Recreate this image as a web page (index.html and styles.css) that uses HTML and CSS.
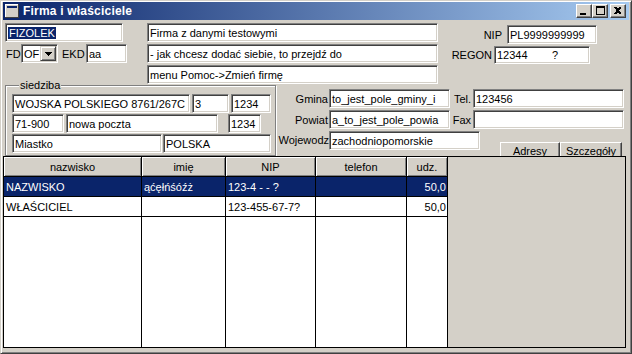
FILE: index.html
```html
<!DOCTYPE html>
<html lang="pl">
<head>
    <meta charset="UTF-8">
    <title>Firma i właściciele</title>
    <link rel="stylesheet" href="styles.css">
</head>
<body>
    <div class="window">
        <div class="titlebar">
            <svg class="app-icon" width="14" height="14" viewBox="0 0 14 14" shape-rendering="crispEdges">
                <rect x="0" y="0" width="14" height="14" fill="#d4d0c8"/>
                <rect x="0" y="0" width="13" height="1" fill="#fff"/>
                <rect x="0" y="0" width="1" height="13" fill="#fff"/>
                <rect x="0" y="13" width="14" height="1" fill="#404040"/>
                <rect x="13" y="0" width="1" height="14" fill="#404040"/>
                <rect x="2" y="2" width="10" height="2" fill="#0a246a"/>
            </svg>
            <span class="caption">Firma i właściciele</span>
            <div class="caption-btns">
                <span class="cbtn">
                    <svg width="14" height="12" viewBox="0 0 14 12" shape-rendering="crispEdges"><rect x="3" y="8" width="6" height="2" fill="#000"/></svg>
                </span>
                <span class="cbtn">
                    <svg width="14" height="12" viewBox="0 0 14 12" shape-rendering="crispEdges"><path d="M3 1h9v9h-9z M4 3v6h7v-6z" fill="#000" fill-rule="evenodd"/></svg>
                </span>
                <span class="cbtn close">
                    <svg width="14" height="12" viewBox="0 0 14 12" shape-rendering="crispEdges"><path d="M3 2h2l1 1h1l1-1h2v1l-2 2v1l2 2v1h-2l-1-1h-1l-1 1h-2v-1l2-2v-1l-2-2z" fill="#000"/></svg>
                </span>
            </div>
        </div>

        <div class="client">
            <div class="top">
                <div class="col-left">
                    <div class="edit w-short"><span class="sel">FIZOLEK</span></div>
                    <div class="fd-row">
                        <span class="lbl lbl-fd">FD</span>
                        <div class="edit combo">
                            <span>OF</span>
                            <span class="drop">
                                <svg width="7" height="4" viewBox="0 0 7 4" shape-rendering="crispEdges"><path d="M0 0h7v1h-1v1h-1v1h-1v1h-1v-1h-1v-1h-1v-1h-1z" fill="#000"/></svg>
                            </span>
                        </div>
                        <span class="lbl lbl-ekd">EKD</span>
                        <div class="edit w-ekd">aa</div>
                    </div>
                </div>
                <div class="col-mid">
                    <div class="edit">Firma z danymi testowymi</div>
                    <div class="edit">- jak chcesz dodać siebie, to przejdź do</div>
                    <div class="edit">menu Pomoc-&gt;Zmień firmę</div>
                </div>
                <div class="col-right">
                    <div class="row-nip">
                        <span class="lbl">NIP</span>
                        <div class="edit w-nip">PL9999999999</div>
                    </div>
                    <div class="row-regon">
                        <span class="lbl">REGON</span>
                        <div class="edit w-regon keep">12344        ?</div>
                    </div>
                </div>
            </div>

            <div class="middle">
                <fieldset class="group">
                    <legend>siedziba</legend>
                    <div class="g-row">
                        <div class="edit w178">WOJSKA POLSKIEGO 8761/267C</div>
                        <div class="edit w37">3</div>
                        <div class="edit w40">1234</div>
                    </div>
                    <div class="g-row">
                        <div class="edit w52">71-900</div>
                        <div class="edit w152">nowa poczta</div>
                        <div class="edit w33 push">1234</div>
                    </div>
                    <div class="g-row tight">
                        <div class="edit w150">Miastko</div>
                        <div class="edit w108">POLSKA</div>
                    </div>
                </fieldset>

                <div class="admin">
                    <span class="lbl">Gmina</span>
                    <div class="edit">to_jest_pole_gminy_i</div>
                    <span class="lbl lbl-small">Tel.</span>
                    <div class="edit">123456</div>

                    <span class="lbl">Powiat</span>
                    <div class="edit">a_to_jest_pole_powia</div>
                    <span class="lbl lbl-small">Fax</span>
                    <div class="edit"></div>

                    <span class="lbl lbl-top">Wojewodz</span>
                    <div class="edit woj">zachodniopomorskie</div>
                    <div class="buttons">
                        <span class="btn b-adresy">Adresy</span>
                        <span class="btn b-szcz"><u>S</u>zczegóły</span>
                    </div>
                </div>
            </div>

            <div class="grid">
                <table>
                    <tr class="head">
                        <th class="c1">nazwisko</th>
                        <th class="c2">imię</th>
                        <th class="c3">NIP</th>
                        <th class="c4">telefon</th>
                        <th class="c5">udz.</th>
                    </tr>
                    <tr class="selected">
                        <td>NAZWISKO</td>
                        <td>ąćęłńśóźż</td>
                        <td class="keep">123-4  -  - ?</td>
                        <td></td>
                        <td class="num">50,0</td>
                    </tr>
                    <tr>
                        <td>WŁAŚCICIEL</td>
                        <td></td>
                        <td>123-455-67-7?</td>
                        <td></td>
                        <td class="num">50,0</td>
                    </tr>
                    <tr class="fill">
                        <td></td><td></td><td></td><td></td><td></td>
                    </tr>
                </table>
                <div class="grid-rest"></div>
            </div>
        </div>
    </div>
</body>
</html>
```

FILE: styles.css
```css
* {
    box-sizing: border-box;
}

body {
    margin: 0;
    background: #d4d0c8;
    font-family: "Liberation Sans", Arial, sans-serif;
    font-size: 11px;
    color: #000;
}

.window {
    width: 632px;
    height: 354px;
    display: flex;
    flex-direction: column;
    border: 1px solid;
    border-color: #d4d0c8 #404040 #404040 #d4d0c8;
    box-shadow: inset 1px 1px #fff, inset -1px -1px #808080;
    padding: 1px 2px 2px 2px;
}

/* title bar */
.titlebar {
    height: 18px;
    display: flex;
    align-items: center;
    padding: 0 3px 0 2px;
    background: linear-gradient(to right, #0a246a, #a6caf0);
    color: #fff;
}

.app-icon {
    display: block;
}

.caption {
    margin-left: 4px;
    font-weight: bold;
    font-size: 12px;
    letter-spacing: 0.2px;
}

.caption-btns {
    margin-left: auto;
    display: flex;
}

.cbtn {
    width: 16px;
    height: 14px;
    display: flex;
    background: #d4d0c8;
    border: 1px solid;
    border-color: #fff #404040 #404040 #fff;
    box-shadow: inset -1px -1px #808080;
}

.cbtn svg {
    display: block;
}

.cbtn.close {
    margin-left: 2px;
}

/* client area */
.client {
    flex: 1;
    display: flex;
    flex-direction: column;
    padding-top: 3px;
}

.edit {
    height: 19px;
    display: flex;
    align-items: center;
    padding-left: 2px;
    background: #fff;
    border: 1px solid;
    border-color: #808080 #fff #fff #808080;
    box-shadow: inset 1px 1px #404040, inset -1px -1px #d4d0c8;
    white-space: nowrap;
    overflow: hidden;
}

.keep {
    white-space: pre;
}

.lbl {
    white-space: nowrap;
}

.sel {
    background: #0a246a;
    color: #fff;
    line-height: 12px;
    padding: 0 1px;
}

.top {
    display: flex;
}

.col-left {
    width: 144px;
    padding-left: 2px;
}

.w-short {
    width: 118px;
}

.fd-row {
    display: flex;
    align-items: center;
    margin-top: 2px;
}

.lbl-fd {
    margin-left: 1px;
    width: 15px;
}

.combo {
    width: 37px;
    padding-right: 1px;
}

.drop {
    margin-left: auto;
    width: 16px;
    height: 15px;
    display: flex;
    align-items: center;
    justify-content: center;
    background: #d4d0c8;
    border: 1px solid;
    border-color: #d4d0c8 #404040 #404040 #d4d0c8;
    box-shadow: inset 1px 1px #fff, inset -1px -1px #808080;
}

.drop svg {
    display: block;
}

.lbl-ekd {
    margin-left: 4px;
    width: 24px;
}

.w-ekd {
    width: 41px;
}

.col-mid {
    width: 291px;
    display: flex;
    flex-direction: column;
    gap: 2px;
}

.col-right {
    flex: 1;
    display: flex;
    flex-direction: column;
    align-items: flex-end;
    padding-top: 2px;
}

.row-nip,
.row-regon {
    display: flex;
    align-items: center;
}

.row-nip {
    margin-right: 32px;
    gap: 5px;
}

.row-regon {
    margin-top: 2px;
    margin-right: 39px;
    gap: 2px;
}

.w-nip {
    width: 90px;
}

.w-regon {
    width: 96px;
    height: 18px;
}

/* siedziba + adres */
.middle {
    display: flex;
    align-items: flex-start;
    margin-top: -4px;
}

.group {
    width: 271px;
    margin: 0 0 0 2px;
    padding: 3px 4px 2px 6px;
    border: 1px solid #808080;
    box-shadow: inset 1px 1px #fff, 1px 1px #fff;
    min-width: 0;
}

.group legend {
    padding: 0 1px;
    margin-left: 7px;
    line-height: 11px;
    background: #d4d0c8;
}

.g-row {
    display: flex;
    gap: 2px;
    margin-bottom: 1px;
}

.g-row.tight {
    gap: 1px;
    margin-bottom: 0;
}

.w178 { width: 178px; }
.w37 { width: 37px; }
.w40 { width: 40px; }
.w52 { width: 52px; }
.w152 { width: 152px; }
.w33 { width: 33px; }
.w150 { width: 150px; }
.w108 { width: 108px; }

.push {
    margin-left: 8px;
}

.admin {
    margin: 9px 0 0 2px;
    display: grid;
    grid-template-columns: 51px 121px 23px 151px;
    grid-auto-rows: 19px;
    row-gap: 2px;
    align-items: center;
}

.admin .lbl {
    text-align: right;
    padding-right: 1px;
}

.admin .lbl-small {
    padding-right: 2px;
}

.admin .lbl-top {
    align-self: start;
    line-height: 19px;
    padding-right: 0;
}

.woj {
    grid-column: 2 / span 2;
    width: 151px;
    align-self: start;
}

.admin .buttons {
    grid-row: 3 / span 1;
    grid-column: 4;
    align-self: start;
    height: 28px;
    display: flex;
    align-items: flex-end;
    justify-content: flex-end;
    padding-right: 2px;
}

.btn {
    height: 17px;
    display: flex;
    align-items: center;
    justify-content: center;
    background: #d4d0c8;
    border: 1px solid;
    border-color: #fff #404040 #404040 #fff;
    box-shadow: inset -1px -1px #808080;
}

.b-adresy {
    width: 60px;
}

.b-szcz {
    width: 62px;
}

/* grid */
.grid {
    flex: 1;
    display: flex;
    margin: 0 3px 3px 0;
    border: 1px solid #000;
}

.grid table {
    width: 444px;
    height: 100%;
    border-collapse: separate;
    border-spacing: 0;
    table-layout: fixed;
    background: #fff;
}

.grid th,
.grid td {
    border-right: 1px solid #000;
    border-bottom: 1px solid #000;
    padding: 0 0 0 2px;
    white-space: nowrap;
    overflow: hidden;
    font-weight: normal;
}

.grid tr {
    height: 20px;
}

.grid th {
    background: #d4d0c8;
    text-align: center;
    padding: 0;
    box-shadow: inset 1px 1px #fff, inset -1px -1px #808080;
}

.c1 { width: 138px; }
.c2 { width: 84px; }
.c3 { width: 90px; }
.c4 { width: 91px; }
.c5 { width: 41px; }

.grid td.num {
    text-align: right;
    padding: 0 1px 0 0;
}

.selected td {
    background: #0a246a;
    color: #fff;
}

.grid tr.fill {
    height: auto;
}

.grid tr.fill td {
    border-bottom: none;
}

.grid-rest {
    flex: 1;
    background: #d4d0c8;
}
```
